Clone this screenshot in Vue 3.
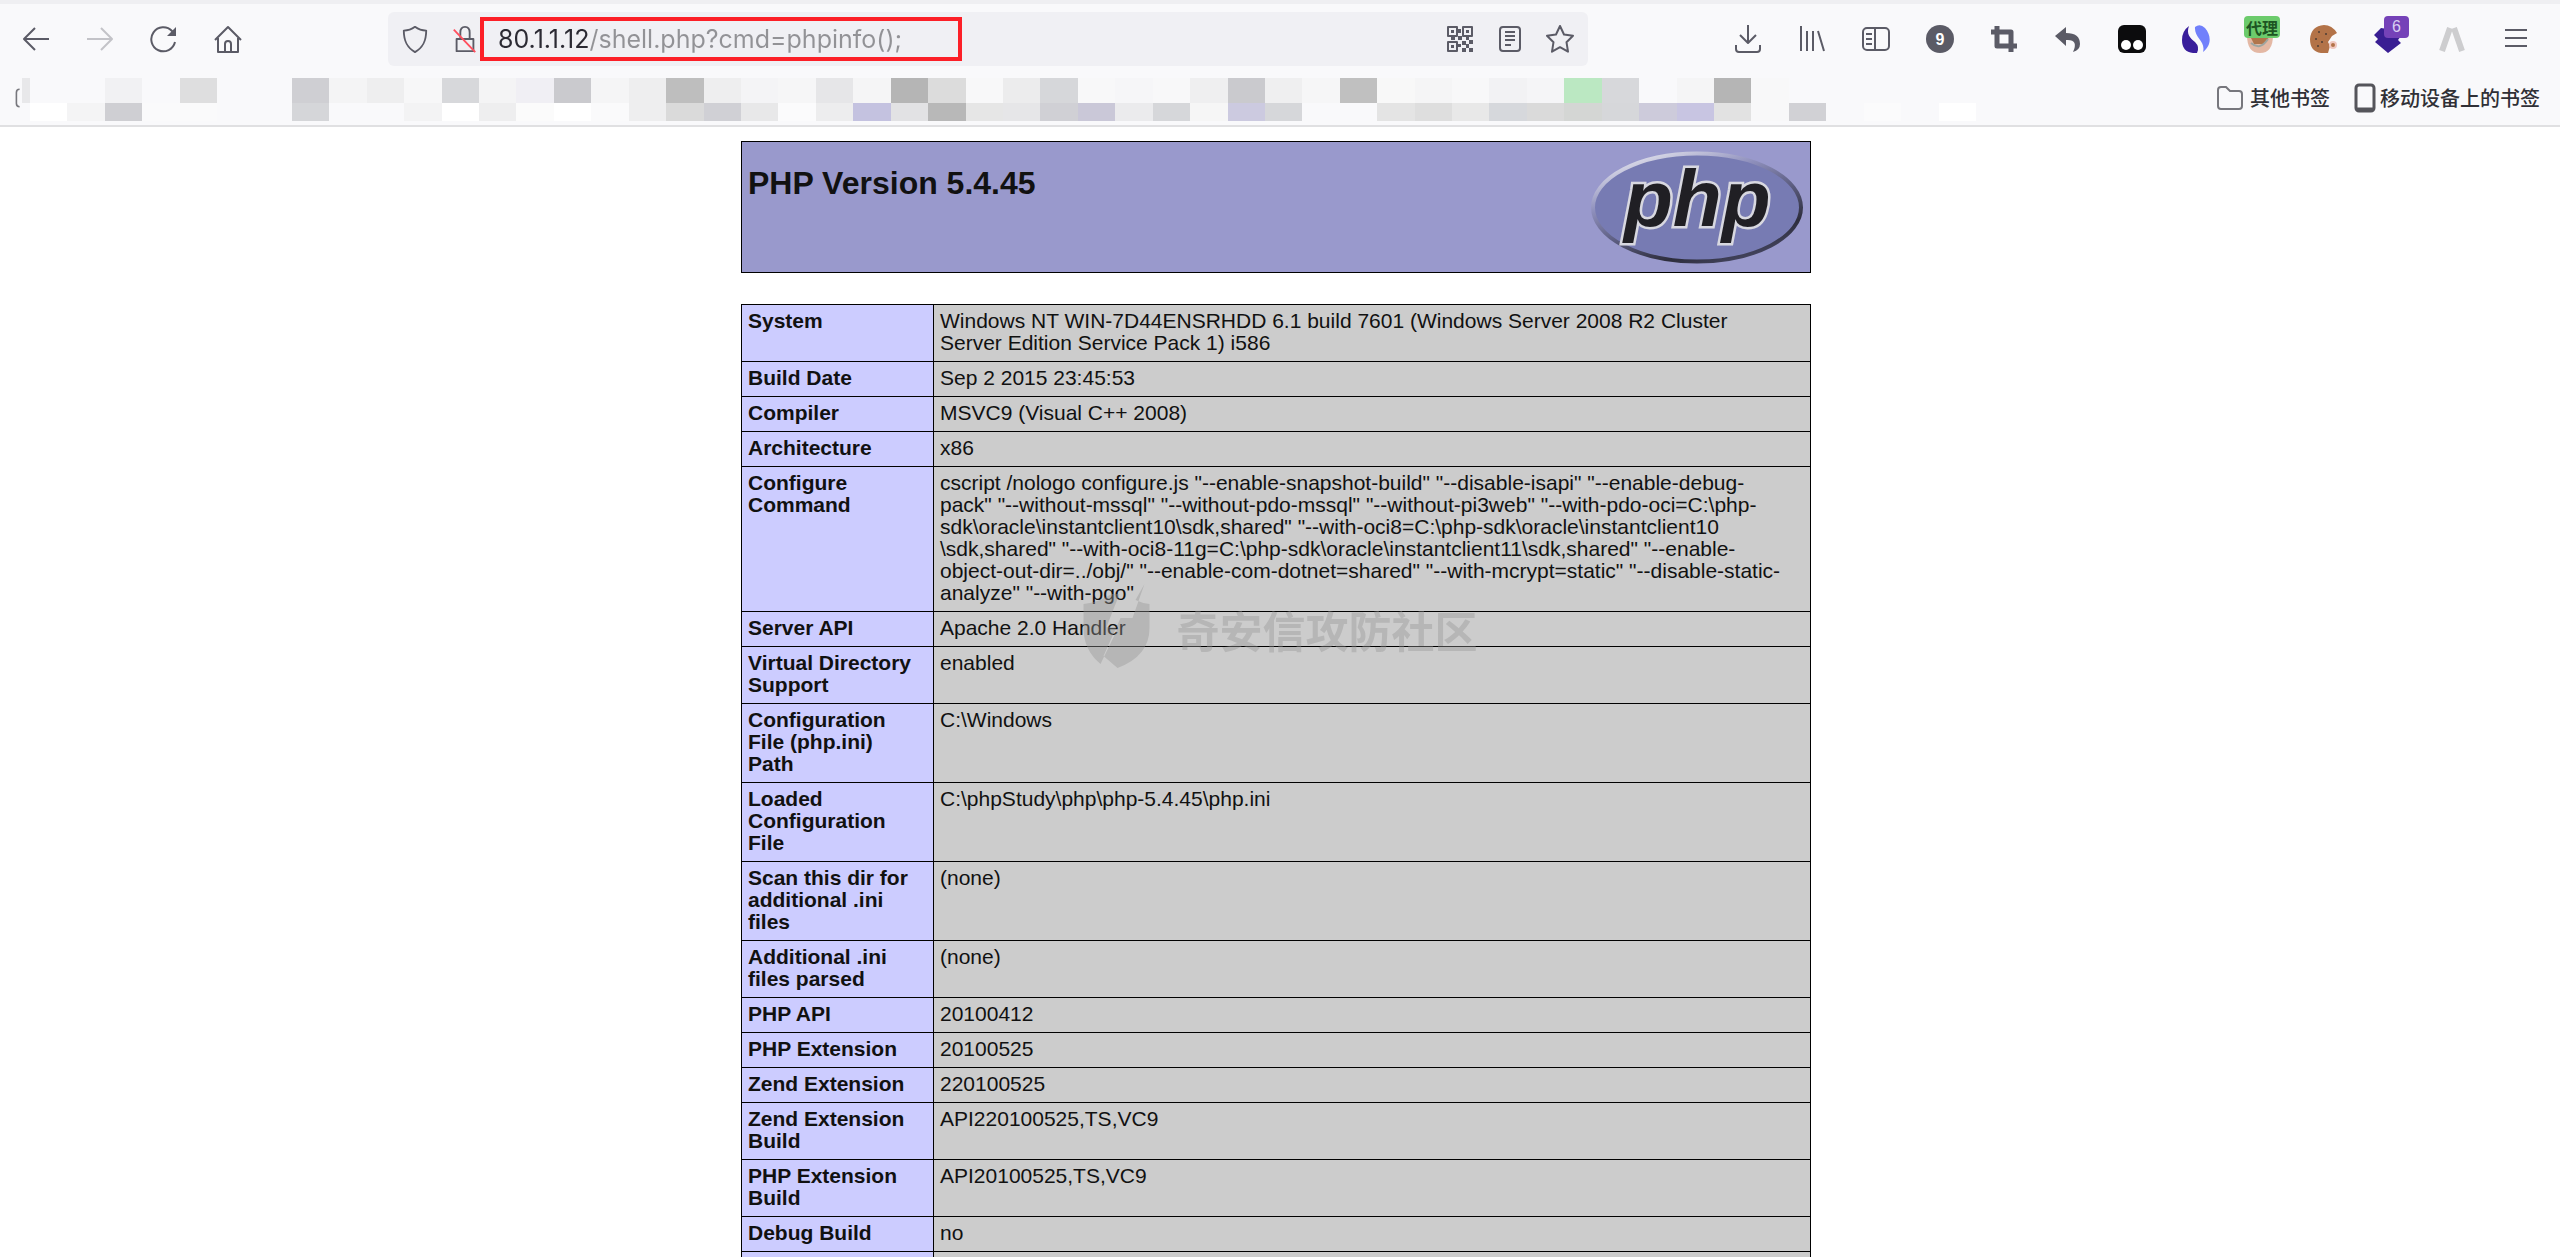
<script setup>
import { ref } from 'vue'

const address = ref('80.1.1.12/shell.php?cmd=phpinfo();')

const mosaic = [
  '0 0 #f1f1f3 0 #dededf 0 0 #cfcfd3 #f4f4f5 #eeeeef #f7f7f8 #d7d8db #f4f4f5 #f0eff4 #cacace #f5f5f6 #eeeeef #bebebe #eeeeef #f4f4f6 #f6f6f7 #e6e6e8 #f5f5f6 #b5b5b5 #dcdcdc #f8f8f9 #ececed #d6d7da #f8f8f9 #f6f6f8 #f8f8f9 #efeff0 #cacace #efeff0 #f6f6f7 #c0c0c0 #f8f8f8 #f5f5f6 #f8f8f9 #f2f2f4 #f5f5f7 #bbe8c2 #d7d8db 0 #f5f5f6 #b5b5b5 #f8f8f9 0 0 0 0 0',
  '#ffffff #f4f4f5 #cfcfd3 #fafafb #fafafb 0 0 #d5d6d9 0 0 #f3f3f4 #ffffff #eeeeef #fbfbfb #ffffff #fafafb #eeeeef #dadada #d0d0d5 #e8e8e9 #fbfbfc #ededee #c4c2e0 #e2e2e4 #b8b8b8 #e6e6e6 #e6e6e8 #d0d0d5 #cac8d8 #ebebed #d6d7da #f6f6f6 #cccae0 #d6d7da 0 0 #e4e4e4 #dedede #e8e8e8 #d6d8dc #dadada #d4d6d4 #d6d7da #cdcbdb #c8c5e2 #e2e2e2 #f8f8f9 #d1d1d5 0 #fbfbfc 0 #ffffff',
].map((row) => row.split(' ').map((c) => (c === '0' ? 'transparent' : c)))

const rows = [
  ['System', 'Windows NT WIN-7D44ENSRHDD 6.1 build 7601 (Windows Server 2008 R2 Cluster\nServer Edition Service Pack 1) i586'],
  ['Build Date', 'Sep 2 2015 23:45:53'],
  ['Compiler', 'MSVC9 (Visual C++ 2008)'],
  ['Architecture', 'x86'],
  [
    'Configure\nCommand',
    [
      'cscript /nologo configure.js "--enable-snapshot-build" "--disable-isapi" "--enable-debug-',
      'pack" "--without-mssql" "--without-pdo-mssql" "--without-pi3web" "--with-pdo-oci=C:\\php-',
      'sdk\\oracle\\instantclient10\\sdk,shared" "--with-oci8=C:\\php-sdk\\oracle\\instantclient10',
      '\\sdk,shared" "--with-oci8-11g=C:\\php-sdk\\oracle\\instantclient11\\sdk,shared" "--enable-',
      'object-out-dir=../obj/" "--enable-com-dotnet=shared" "--with-mcrypt=static" "--disable-static-',
      'analyze" "--with-pgo"',
    ].join('\n'),
  ],
  ['Server API', 'Apache 2.0 Handler'],
  ['Virtual Directory\nSupport', 'enabled'],
  ['Configuration\nFile (php.ini)\nPath', 'C:\\Windows'],
  ['Loaded\nConfiguration\nFile', 'C:\\phpStudy\\php\\php-5.4.45\\php.ini'],
  ['Scan this dir for\nadditional .ini\nfiles', '(none)'],
  ['Additional .ini\nfiles parsed', '(none)'],
  ['PHP API', '20100412'],
  ['PHP Extension', '20100525'],
  ['Zend Extension', '220100525'],
  ['Zend Extension\nBuild', 'API220100525,TS,VC9'],
  ['PHP Extension\nBuild', 'API20100525,TS,VC9'],
  ['Debug Build', 'no'],
  ['', ''],
]
</script>

<template>
  <div class="window">
    <header class="chrome">
      <div class="toolbar">
        <nav class="group">
          <button class="tool" aria-label="Back">
            <svg viewBox="0 0 28 28"><path d="M27 14H2M13 3 2 14l11 11" /></svg>
          </button>
          <button class="tool faded" aria-label="Forward">
            <svg viewBox="0 0 28 28"><path d="M1 14h25M15 3l11 11-11 11" /></svg>
          </button>
          <button class="tool" aria-label="Reload">
            <svg viewBox="0 0 28 28"><path d="M25 17A12 12 0 1 1 22 6l3 3" /><path class="solid" d="M26 2v9h-9z" /></svg>
          </button>
          <button class="tool" aria-label="Home">
            <svg viewBox="0 0 28 28"><path d="M1 15 14 2l13 13M4 13v14h20V13M11 27v-8q0-3 3-3t3 3v8" /></svg>
          </button>
        </nav>

        <div class="urlbar">
          <button class="mini" aria-label="Tracking protection">
            <svg viewBox="0 0 28 30"><path d="M14 2c4 3 8 4 12 4 0 11-3 18-12 23C5 24 2 17 2 6c4 0 8-1 12-4z" /></svg>
          </button>
          <button class="mini lock" aria-label="Connection not secure">
            <svg viewBox="0 0 28 30"><path d="M5 15h18v13H5zM9 15V8q0-6 5-6t5 6v7" /><path class="slash" d="M2 5l23 24" /></svg>
          </button>
          <input v-model="address" class="address" type="text" aria-label="Address" spellcheck="false" />
          <div class="group actions">
            <button class="mini" aria-label="QR code">
              <svg viewBox="0 0 28 28">
                <path d="M2 2h9v9H2zM17 2h9v9h-9zM2 17h9v9H2z" />
                <path class="solid" d="M5 5h3v3H5zM20 5h3v3h-3zM5 20h3v3H5zM12 4h3v4h-3zM12 11h4v4h-4zM5 12h4v3H5zM20 12h3v3h-3zM16 16h4v4h-4zM23 15h4v4h-4zM20 19h3v4h-3zM16 23h4v4h-4zM23 23h4v4h-4zM12 19h3v3h-3z" />
              </svg>
            </button>
            <button class="mini" aria-label="Reader view">
              <svg viewBox="0 0 28 28"><rect x="4" y="2" width="20" height="24" rx="3" /><path d="M9 7h10M9 11h10M9 15h10M9 20h6" /></svg>
            </button>
            <button class="mini" aria-label="Bookmark this page">
              <svg viewBox="0 0 28 28"><path d="M14 1l4 8.500 9 1.200-6.500 6.500 1.500 9.500-8-4.500-8 4.500 1.500-9.500L1 10.700l9-1.200z" /></svg>
            </button>
          </div>
        </div>

        <div class="group">
          <button class="tool" aria-label="Downloads">
            <svg viewBox="0 0 28 28"><path d="M14 0v18M6 10l8 8 8-8M2 20v4q0 3 3 3h18q3 0 3-3v-4" /></svg>
          </button>
          <button class="tool" aria-label="Library">
            <svg viewBox="0 0 28 28"><path d="M3 1v25M9 6v20M15 6v20M20 6l6 20" /></svg>
          </button>
          <button class="tool" aria-label="Sidebar">
            <svg class="wide" viewBox="0 0 30 28"><rect x="2" y="3" width="26" height="22" rx="4" /><path d="M14 3v22M5 9h6M5 14h6M5 19h6" /></svg>
          </button>
          <button class="tool" aria-label="Container 9">
            <svg viewBox="0 0 28 28"><circle class="solid" cx="14" cy="14" r="14" /><text x="14" y="20" text-anchor="middle">9</text></svg>
          </button>
          <button class="tool" aria-label="Crop">
            <svg viewBox="0 0 28 28"><path class="heavy" d="M1 7h20v20M7 1v20h20" /></svg>
          </button>
          <button class="tool" aria-label="Undo">
            <svg viewBox="0 0 28 28"><path class="solid" d="M1 11 12 2v6q14 0 14 11 0 6-7 8 6-13-7-12v6z" /></svg>
          </button>
          <button class="tool" aria-label="Script manager">
            <svg viewBox="0 0 28 28">
              <rect x="0" y="0" width="28" height="28" rx="6" fill="#0c0c0d" stroke="none" />
              <circle cx="8" cy="20" r="5" fill="#fff" stroke="none" /><circle cx="20" cy="20" r="5" fill="#fff" stroke="none" />
            </svg>
          </button>
          <button class="tool" aria-label="Proxy switch">
            <svg viewBox="0 0 28 28">
              <path d="M7 1C4 9 8 13 13 17q5 5 2 11H11Q0 27 0 15 0 6 7 1z" fill="#391e9b" stroke="none" />
              <path d="M13 2q5-4 10 1c7 8 6 18-2 24 3-11-9-14-8-25z" fill="#7180fb" stroke="none" />
            </svg>
          </button>
          <button class="tool" aria-label="Proxy helper">
            <svg viewBox="0 0 28 28">
              <path d="M1 10h26q0 18-13 18T1 10z" fill="#e4b8a4" stroke="none" />
              <path d="M4 11h20l-6 8H8z" fill="#b1754b" stroke="none" />
              <path d="M5 18q9 8 17-4" stroke="#9ea5a0" />
            </svg>
            <span class="badge green">代理</span>
          </button>
          <button class="tool" aria-label="Cookie editor">
            <svg viewBox="0 0 28 28">
              <path d="M14 0q8 0 13 8l-5 3-4 6 2 4-2 7Q0 30 0 14 1 1 14 0z" fill="#b37348" stroke="none" />
              <g fill="#4d3c34" stroke="none"><circle cx="9" cy="7" r="1" /><circle cx="6" cy="14" r="1" /><circle cx="16" cy="9" r="1" /><circle cx="12" cy="17" r="1" /><circle cx="8" cy="21" r="1" /></g>
              <circle cx="23" cy="20" r="3" fill="#b37348" stroke="#f0c8c0" />
            </svg>
          </button>
          <button class="tool" aria-label="Page analyser">
            <svg viewBox="0 0 28 28"><path d="M7 3 20 5l7 6-3 4 3 3-13 10L1 17l3-3-4-4z" fill="#391e93" stroke="none" /></svg>
            <span class="badge purple">6</span>
          </button>
          <button class="tool" aria-label="Markup tool">
            <svg viewBox="0 0 28 28"><path d="M12 3 4 26M16 3l8 23" stroke="#cdcdcf" stroke-width="6" /></svg>
          </button>
          <button class="tool" aria-label="Menu">
            <svg viewBox="0 0 28 28"><path d="M3 5h22M3 13h22M3 21h22" /></svg>
          </button>
        </div>
      </div>

      <div class="bookmarks">
        <svg class="stub" viewBox="0 0 10 26"><path d="M7 2Q3 2 3 6v14q0 4 4 4" /></svg>
        <div class="sliver"></div>
        <div class="mosaic">
          <div v-for="(line, r) in mosaic" :key="r" class="line">
            <i v-for="(c, k) in line" :key="k" :style="{ background: c }"></i>
          </div>
        </div>
        <a class="mark other" href="#">
          <svg class="folder" viewBox="0 0 28 26"><path d="M2 5q0-3 3-3h5l4 4h9q3 0 3 3v12q0 3-3 3H5q-3 0-3-3z" /></svg>
          <span>其他书签</span>
        </a>
        <a class="mark" href="#">
          <svg class="phone" viewBox="0 0 22 30"><rect x="2" y="2" width="18" height="26" rx="3" /><path d="M2 26h18" /></svg>
          <span>移动设备上的书签</span>
        </a>
      </div>
    </header>

    <main class="page">
      <section class="banner">
        <h1>PHP Version 5.4.45</h1>
        <svg class="logo" viewBox="0 0 214 119" role="img" aria-label="PHP logo">
          <defs>
            <linearGradient id="rim" x1="0.2" y1="0" x2="0.8" y2="1">
              <stop offset="0" stop-color="#e4e4ee" />
              <stop offset="0.3" stop-color="#8f90bd" />
              <stop offset="0.55" stop-color="#5c5d80" />
              <stop offset="0.8" stop-color="#2d2d3c" />
              <stop offset="1" stop-color="#4a4b68" />
            </linearGradient>
          </defs>
          <ellipse cx="107" cy="60" rx="104" ry="54" fill="#777bb3" stroke="url(#rim)" stroke-width="4" />
          <text class="wordmark" x="34" y="78">php</text>
        </svg>
      </section>

      <table class="info">
        <tbody>
          <tr v-for="(row, i) in rows" :key="i">
            <th scope="row">{{ row[0] }}</th>
            <td>{{ row[1] }}</td>
          </tr>
        </tbody>
      </table>
    </main>

    <div class="watermark">
      <svg viewBox="0 0 68 90">
        <path d="M1 20q16-2 28-10h8L24 43h12L18 80Q1 66 1 44zM62 0 50 34H38L21 72l14 12Q67 72 67 44V20q-8-1-14-4z" />
      </svg>
      <span>奇安信攻防社区</span>
    </div>
  </div>
</template>

<style>
body {
  margin: 0;
}
</style>

<style scoped>
.window {
  position: relative;
  display: flex;
  flex-direction: column;
  height: 100vh;
  overflow: hidden;
  background: #fff;
  font-family: "Liberation Sans", "Noto Sans CJK SC", sans-serif;
}
.chrome {
  flex: none;
  border-top: 4px solid #efeff2;
  border-bottom: 2px solid #e0e0e2;
  background: #f9f9fb;
}
.toolbar {
  display: flex;
  align-items: center;
  padding: 8px 12px 0 4px;
}
.group {
  display: flex;
}
button {
  display: flex;
  align-items: center;
  justify-content: center;
  height: 54px;
  padding: 0;
  border: 0;
  background: none;
  color: #5b5b66;
}
.tool {
  position: relative;
  width: 64px;
}
.mini {
  width: 50px;
}
.faded {
  color: #c3c3c8;
}
svg {
  flex: none;
  fill: none;
  stroke: currentColor;
  stroke-width: 2;
}
button svg {
  width: 28px;
  height: 28px;
}
button svg.wide {
  width: 30px;
}
button svg path,
button svg rect {
  stroke-linejoin: round;
}
.solid {
  fill: currentColor;
  stroke: none;
}
.heavy {
  stroke-width: 5;
}
.tool text {
  fill: #fff;
  stroke: none;
  font: bold 16px "Liberation Sans", sans-serif;
}
.slash {
  stroke: #ff4f5e;
}
.badge {
  position: absolute;
  top: 4px;
  border-radius: 4px;
  line-height: 22px;
  text-align: center;
}
.green {
  left: 16px;
  width: 36px;
  background: #6ccb6c;
  color: #1d5522;
  font-size: 16px;
  font-family: "Noto Sans CJK SC", sans-serif;
  font-weight: 700;
}
.purple {
  left: 28px;
  width: 25px;
  background: #7542b8;
  color: #d9cff2;
  font-size: 16px;
}
.urlbar {
  display: flex;
  flex: 1;
  align-items: center;
  margin: 0 128px;
  padding: 0 3px 0 2px;
  border-radius: 6px;
  background: #f0f0f4;
}
.lock {
  width: 40px;
  padding-left: 10px;
}
.address {
  flex: 0 1 482px;
  box-sizing: border-box;
  height: 44px;
  padding: 0 14px;
  border: 4px solid #fc1f27;
  outline: 0;
  background: linear-gradient(90deg, #2b2a33 106px, #929296 106px);
  background-clip: text;
  -webkit-background-clip: text;
  background-origin: padding-box;
  -webkit-text-fill-color: transparent;
  font: 25px Inter, sans-serif;
}
.actions {
  margin-left: auto;
}
.bookmarks {
  display: flex;
  align-items: center;
  height: 55px;
  padding: 4px 20px 0 14px;
}
.stub {
  width: 8px;
  height: 26px;
  color: #77777d;
}
.sliver {
  align-self: flex-start;
  width: 8px;
  height: 25px;
  margin-top: 8px;
  background: #e8e8ea;
}
.mosaic {
  width: 76vw;
  align-self: flex-start;
  margin-top: 8px;
}
.line {
  display: flex;
  height: 25px;
}
.line + .line {
  height: 18px;
}
.line i {
  flex: 1;
}
.mark {
  display: flex;
  align-items: center;
  gap: 4px;
  color: #303036;
  font: 500 20px/28px "Noto Sans CJK SC", sans-serif;
  text-decoration: none;
  white-space: nowrap;
}
.other {
  gap: 6px;
  margin: 0 24px 0 auto;
}
.folder {
  width: 28px;
  height: 26px;
  color: #77777d;
}
.phone {
  width: 22px;
  height: 30px;
  color: #55555b;
  stroke-width: 3;
}
.page {
  display: flex;
  flex: 1;
  flex-direction: column;
  align-items: center;
  gap: 31px;
  min-height: 0;
  padding: 14px 8px 0 0;
  color: #111;
}
.banner {
  display: flex;
  flex: none;
  align-items: flex-start;
  justify-content: space-between;
  box-sizing: border-box;
  width: 1070px;
  max-width: 100%;
  padding: 5px 6px;
  border: 1px solid #000;
  background: #9999cc;
}
h1 {
  margin: 18px 0 0;
  font-size: 32px;
  line-height: 36px;
}
.logo {
  width: 214px;
  height: 120px;
}
.wordmark {
  fill: #201f24;
  stroke: #d8d8e0;
  stroke-width: 5;
  paint-order: stroke;
  font: italic bold 80px "Liberation Sans", sans-serif;
}
.info {
  width: 1070px;
  max-width: 100%;
  border-collapse: collapse;
  background: #cccccc;
  font-size: 21px;
  line-height: 22px;
  white-space: pre;
}
th,
td {
  height: 22px;
  padding: 5px 6px 7px;
  border: 1px solid #000;
  text-align: left;
  vertical-align: top;
}
th {
  width: 179px;
  background: #ccccff;
}
.watermark {
  position: absolute;
  top: 50%;
  left: 50%;
  display: flex;
  align-items: center;
  gap: 26px;
  transform: translate(-50%, -50%);
  color: #969696;
  opacity: 0.4;
  font: 700 43px/48px "Noto Sans CJK SC", sans-serif;
  white-space: nowrap;
  pointer-events: none;
}
.watermark svg {
  width: 68px;
  height: 90px;
  fill: currentColor;
  stroke: none;
}
</style>
